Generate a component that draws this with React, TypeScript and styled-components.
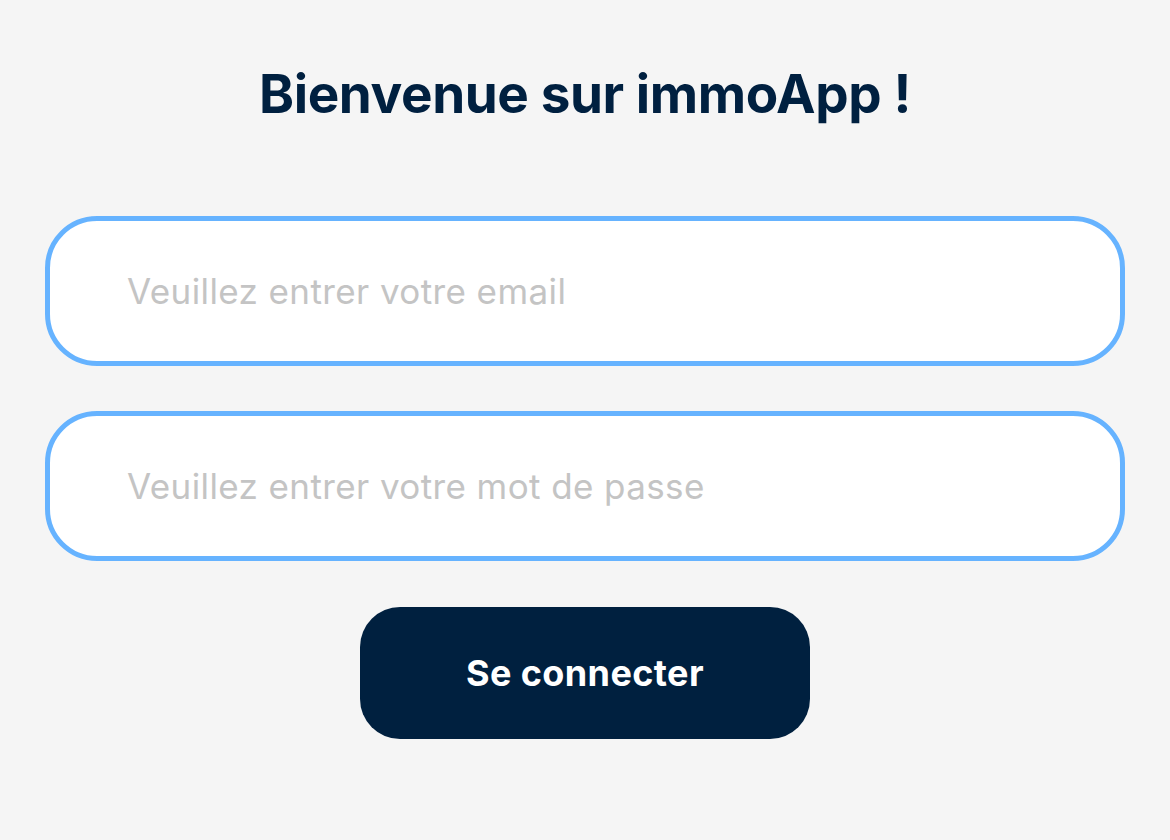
import React from 'react';
import styled, { createGlobalStyle } from 'styled-components';

const GlobalStyle = createGlobalStyle`
  html, body {
    margin: 0;
    padding: 0;
    background-color: #f5f5f5;
  }
`;

const App = () => {
  return (
    <>
      <GlobalStyle />
      <PageLayout>
        <Title>Bienvenue sur immoApp !</Title>
        <Form>
          <Field type="email" placeholder="Veuillez entrer votre email" />
          <Field type="password" placeholder="Veuillez entrer votre mot de passe" />
          <SubmitButton type="button">Se connecter</SubmitButton>
        </Form>
      </PageLayout>
    </>
  );
};

export default App;

const PageLayout = styled.div`
  display: flex;
  flex-direction: column;
  align-items: center;

  height: 840px;
  padding: 61px 45px 0;
  box-sizing: border-box;

  background-color: #f5f5f5;
`;

const Title = styled.h1`
  margin: 0;
  font-family: Inter, 'Liberation Sans', sans-serif;
  font-size: 53px;
  font-weight: 700;
  letter-spacing: -0.4px;
  line-height: 66px;
  color: #002040;
`;

const Form = styled.div`
  display: flex;
  flex-direction: column;
  align-items: center;
  gap: 45px;

  width: 100%;
  margin-top: 89px;
`;

const Field = styled.input`
  width: 100%;
  height: 150px;
  box-sizing: border-box;

  padding: 0 0 0 77px;
  border: 5px solid #66b3ff;
  border-radius: 52px;
  background-color: #ffffff;
  outline: none;

  font-family: Inter, 'Liberation Sans', sans-serif;
  font-size: 35px;
  letter-spacing: 0.4px;
  color: #333333;

  &::placeholder {
    color: #c4c4c4;
  }
`;

const SubmitButton = styled.button`
  width: 450px;
  height: 132px;
  margin-top: 1px;

  border: none;
  border-radius: 40px;
  background-color: #00203f;

  font-family: Inter, 'Liberation Sans', sans-serif;
  font-size: 36px;
  font-weight: 700;
  letter-spacing: 0.4px;
  color: #ffffff;
  cursor: pointer;
`;
